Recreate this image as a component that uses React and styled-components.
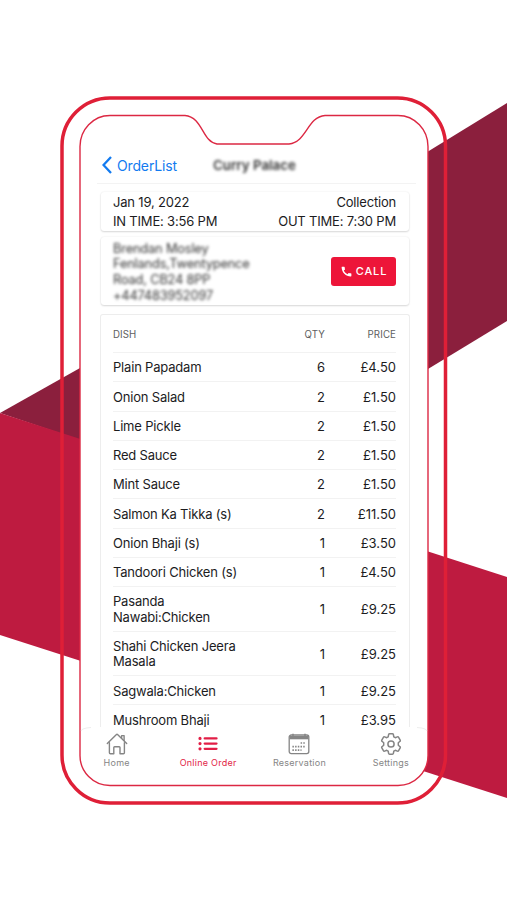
import React from 'react';
import styled, { createGlobalStyle } from 'styled-components';
import { MdCall } from 'react-icons/md';

const GlobalStyle = createGlobalStyle`
    body {
        margin: 0;
        background: #fff;
        font-family: Inter, "Liberation Sans", sans-serif;
        color: #1c1c1e;
    }
`;

const Page = styled.main`
    position: relative;
    display: flex;
    box-sizing: border-box;
    width: 507px;
    height: 900px;
    padding: 116px 79px 115px 80px;
    overflow: hidden;
`;

const Artwork = styled.svg`
    position: absolute;
    inset: 0;
    width: 507px;
    height: 900px;
`;

const Screen = styled.section`
    position: relative;
    display: flex;
    flex-direction: column;
    width: 348px;
    height: 669px;
`;

const Header = styled.header`
    display: grid;
    grid-template-columns: 111px auto 1fr;
    align-items: center;
    box-sizing: border-box;
    flex: none;
    height: 68px;
    margin: 0 12px 8px 17px;
    padding: 31px 0 0 5px;
    border-bottom: 1px solid #f3f3f3;
`;

const Back = styled.a`
    display: flex;
    align-items: center;
    gap: 5px;
    color: #137bf0;
    font-size: 14px;
    letter-spacing: -0.15px;
`;

const Title = styled.h1`
    margin: 0;
    font-size: 13.3px;
    font-weight: 600;
    color: #333;
    filter: blur(1.4px);
`;

const Content = styled.div`
    display: flex;
    flex-direction: column;
    flex: 1;
    min-height: 0;
    margin: 0 19px 0 21px;
`;

const Card = styled.div`
    display: flex;
    justify-content: space-between;
    align-items: center;
    box-sizing: border-box;
    flex: none;
    height: ${props => props.$height}px;
    margin-bottom: ${props => props.$gap}px;
    padding: 0 13px 0 12px;
    border-radius: 3px;
    background: #fff;
    box-shadow: 0 1px 2px rgba(0, 0, 0, 0.14), 0 0 2px rgba(0, 0, 0, 0.08);
`;

const Times = styled.div`
    padding-top: 1px;
    font-size: 13px;
    letter-spacing: -0.19px;
    line-height: 19px;
    text-align: ${props => props.$align || 'left'};
`;

const Customer = styled.div`
    padding-top: 2px;
    font-size: 12.8px;
    letter-spacing: -0.16px;
    line-height: 15.7px;
    color: #333;
    white-space: pre-line;
    filter: blur(1.4px);
`;

const CallButton = styled.button`
    display: flex;
    align-items: center;
    justify-content: center;
    gap: 3px;
    width: 65px;
    height: 29px;
    padding: 0;
    border: 0;
    border-radius: 3px;
    background: #ed1539;
    color: #fff;
    font-family: inherit;
    font-size: 11px;
    font-weight: 500;
    letter-spacing: 0.9px;
`;

const Dishes = styled.div`
    flex: 1;
    min-height: 0;
    margin: 0 -1px;
    padding: 0 13px 0 12px;
    border: 1px solid #ededed;
    border-bottom: 0;
    border-radius: 3px 3px 0 0;
    overflow: hidden;
`;

const Row = styled.div`
    display: grid;
    grid-template-columns: 142px 1fr 71px;
    align-items: center;
    box-sizing: border-box;
    height: ${props => props.$height || 29.25}px;
    padding-top: 2px;
    border-bottom: 1px solid #f2f2f2;
    font-size: 13px;
    letter-spacing: -0.19px;
    line-height: 15.6px;
`;

const HeadRow = styled(Row)`
    color: #606060;
    font-size: 9.7px;
    letter-spacing: 0.1px;
`;

const Cell = styled.span`
    text-align: ${props => props.$align || 'left'};
    white-space: pre-line;
`;

const NumberCell = styled(Cell)`
    text-align: right;
    letter-spacing: 0;
`;

const TabBar = styled.nav`
    display: grid;
    grid-template-columns: repeat(4, 91.4px);
    flex: none;
    height: 58px;
    margin: 0 -9px;
`;

const Tab = styled.div`
    display: flex;
    flex-direction: column;
    align-items: center;
    padding-top: 6px;
    gap: 1px;
    color: ${props => (props.$active ? '#e21e46' : '#858585')};
    font-size: 9px;
    line-height: 14px;
    letter-spacing: 0.25px;
    white-space: nowrap;

    svg {
        display: block;
    }
`;

const dishes = [
    { name: 'Plain Papadam', qty: 6, price: '£4.50' },
    { name: 'Onion Salad', qty: 2, price: '£1.50' },
    { name: 'Lime Pickle', qty: 2, price: '£1.50' },
    { name: 'Red Sauce', qty: 2, price: '£1.50' },
    { name: 'Mint Sauce', qty: 2, price: '£1.50' },
    { name: 'Salmon Ka Tikka (s)', qty: 2, price: '£11.50' },
    { name: 'Onion Bhaji (s)', qty: 1, price: '£3.50' },
    { name: 'Tandoori Chicken (s)', qty: 1, price: '£4.50' },
    { name: 'Pasanda\nNawabi:Chicken', qty: 1, price: '£9.25', height: 44.6 },
    { name: 'Shahi Chicken Jeera\nMasala', qty: 1, price: '£9.25', height: 44.6 },
    { name: 'Sagwala:Chicken', qty: 1, price: '£9.25' },
    { name: 'Mushroom Bhaji', qty: 1, price: '£3.95' },
];

const HomeIcon = () => (
    <svg width="22" height="22" viewBox="0 0 22 22" fill="none" stroke="currentColor" strokeWidth="1.4" strokeLinejoin="round" strokeLinecap="round">
        <path d="M3.4 9.8v9.9q0 1 1 1h3.4v-6.2q0-.8.8-.8h4.6q.8 0 .8.8v6.2h3.4q1 0 1-1V9.8" />
        <path d="M1.3 10.6 10.2 1.7q.8-.7 1.6 0l8.9 8.9" />
        <path d="M15.6 5.2V2.6h2.5v5" />
    </svg>
);

const ListIcon = () => (
    <svg width="22" height="22" viewBox="0 0 22 22" stroke="currentColor" strokeLinecap="round">
        <path d="M7.7 5.4h11.8M7.7 10.6h11.8M7.7 15.8h11.8" strokeWidth="2.3" />
        <path d="M3 5.4h.01M3 10.6h.01M3 15.8h.01" strokeWidth="3.2" />
    </svg>
);

const CalendarIcon = () => (
    <svg width="22" height="22" viewBox="0 0 22 22" fill="none" stroke="currentColor">
        <rect x="1.2" y="2" width="19.6" height="18.6" rx="2" strokeWidth="1.3" />
        <path d="M1.6 4.6h18.8" strokeWidth="3.4" />
        <path d="M5 .7v3M17 .7v3" strokeWidth="1.5" />
        <path d="M12.6 10h5M4.4 13.6h13.2M4.4 17.2h9.1" strokeWidth="1.7" strokeDasharray="1.5 1.2" />
    </svg>
);

const GearIcon = () => (
    <svg width="22" height="22" viewBox="0 0 22 22" fill="none" stroke="currentColor" strokeWidth="1.5" strokeLinejoin="round">
        <path d="M8.6 1.7Q8.8.8 9.6.8h2.8q.8 0 1 .9l.4 2.1 1.5.9 2-.8q.9-.3 1.3.4l1.6 2.8q.4.7-.2 1.2L18.3 9.8v2.4l1.7 1.5q.6.5.2 1.2l-1.6 2.8q-.4.7-1.3.4l-2-.8-1.5.9-.4 2.1q-.2.9-1 .9H9.6q-.8 0-1-.9l-.4-2.1-1.5-.9-2 .8q-.9.3-1.3-.4L1.8 14.9q-.4-.7.2-1.2l1.7-1.5V9.8L2 8.3q-.6-.5-.2-1.2l1.6-2.8q.4-.7 1.3-.4l2 .8 1.5-.9z" />
        <circle cx="11" cy="11" r="3.1" />
    </svg>
);

const tabs = [
    { label: 'Home', icon: <HomeIcon /> },
    { label: 'Online Order', icon: <ListIcon />, active: true },
    { label: 'Reservation', icon: <CalendarIcon /> },
    { label: 'Settings', icon: <GearIcon /> },
];

const screenShape = 'M110 115.5H185C203 117 202 142 217 144H289C307 142 307 117 325 115.5H398A30 31 0 0 1 428 147V755A30 30 0 0 1 398 785.5H110A30 30 0 0 1 80 755V147A30 31 0 0 1 110 115.5Z';

// ribbon behind the phone, phone body and the notched screen
const Backdrop = () => (
    <Artwork viewBox="0 0 507 900">
        <path d="M0 413 80 368V440Z" fill="#8b1f3d" />
        <path d="M428 151.5 507 103V321L428 369Z" fill="#8b1f3d" />
        <path d="M0 413 507 577V798L0 635Z" fill="#be1b40" />
        <path d={screenShape} fill="#fff" stroke="#dc2843" strokeWidth="1.4" />
        <path d="M81 731q1-3 10-3.5M427 731q-1-3-10-3.5" fill="none" stroke="#eee" />
        <rect x="62" y="98" width="383.5" height="705" rx="48" fill="none" stroke="#df1f37" strokeWidth="3.5" />
    </Artwork>
);

const App = () => {
    return (
        <Page>
            <GlobalStyle />
            <Backdrop />
            <Screen>
                <Header>
                    <Back>
                        <svg width="10" height="18" viewBox="0 0 10 18" fill="none" stroke="currentColor" strokeWidth="2.3">
                            <path d="M9 1 1.5 9 9 17" />
                        </svg>
                        OrderList
                    </Back>
                    <Title>Curry Palace</Title>
                </Header>
                <Content>
                    <Card $height={38.5} $gap={6.5}>
                        <Times>Jan 19, 2022<br />IN TIME: 3:56 PM</Times>
                        <Times $align="right">Collection<br />OUT TIME: 7:30 PM</Times>
                    </Card>
                    <Card $height={68} $gap={9}>
                        <Customer>{'Brendan Mosley\nFenlands,Twentypence\nRoad, CB24 8PP\n+447483952097'}</Customer>
                        <CallButton><MdCall size={13} />CALL</CallButton>
                    </Card>
                    <Dishes>
                        <HeadRow $height={38}>
                            <Cell>DISH</Cell>
                            <Cell $align="right">QTY</Cell>
                            <Cell $align="right">PRICE</Cell>
                        </HeadRow>
                        {dishes.map(dish => (
                            <Row key={dish.name} $height={dish.height}>
                                <Cell>{dish.name}</Cell>
                                <NumberCell>{dish.qty}</NumberCell>
                                <NumberCell>{dish.price}</NumberCell>
                            </Row>
                        ))}
                    </Dishes>
                </Content>
                <TabBar>
                    {tabs.map(tab => (
                        <Tab key={tab.label} $active={tab.active}>
                            {tab.icon}
                            {tab.label}
                        </Tab>
                    ))}
                </TabBar>
            </Screen>
        </Page>
    );
};

export default App;
